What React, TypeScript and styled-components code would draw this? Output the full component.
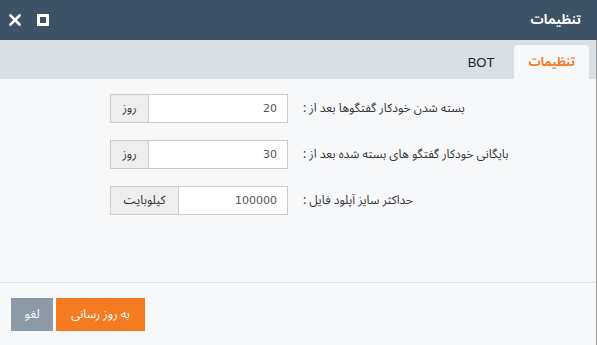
import React from "react";
import styled, { createGlobalStyle } from "styled-components";

const Global = createGlobalStyle`
  html, body { margin: 0; padding: 0; background: #f7f8fa; }
  body { font-family: "Noto Sans Arabic", "DejaVu Sans", "Noto Sans", sans-serif; }
  * { box-sizing: border-box; }
`;

const Dialog = styled.div`
  width: 597px;
  height: 345px;
  display: flex;
  flex-direction: column;
  background: #f7f8fa;
  direction: rtl;
  overflow: hidden;
`;

const Header = styled.div`
  height: 40px;
  flex: none;
  background: #3e5266;
  display: flex;
  align-items: center;
  justify-content: space-between;
  padding: 0 16px 0 9px;
`;

const Title = styled.div`
  color: #ffffff;
  font-size: 13px;
  font-weight: bold;
`;

const HeaderTools = styled.div`
  display: flex;
  direction: ltr;
  align-items: center;
  gap: 16px;
  order: 2;
`;

const Body = styled.div`
  flex: 1;
  display: flex;
  flex-direction: column;
  border-right: 1px solid #9a9a9a;
`;

const TabBar = styled.div`
  height: 39px;
  flex: none;
  background: #d9e0e5;
  display: flex;
  align-items: flex-end;
  padding-right: 7px;
`;

const Tab = styled.div<{ $active?: boolean }>`
  height: 34px;
  padding: ${(p) => (p.$active ? "0 14px" : "0 20px")};
  display: flex;
  align-items: center;
  font-size: ${(p) => (p.$active ? "12px" : "13px")};
  border-radius: 4px 4px 0 0;
  background: ${(p) => (p.$active ? "#f7f8fa" : "transparent")};
  color: ${(p) => (p.$active ? "#f47b20" : "#222")};
  font-weight: ${(p) => (p.$active ? "bold" : "normal")};
  font-family: ${(p) => (p.$active ? "inherit" : '"Liberation Sans", "DejaVu Sans", sans-serif')};
`;

const Form = styled.div`
  flex: 1;
  display: flex;
  flex-direction: column;
  gap: 17px;
  padding: 15px 12px 0 0;
`;

const Row = styled.div`
  display: flex;
  align-items: center;
  gap: 15px;
  height: 29px;
`;

const Label = styled.div`
  width: 281px;
  text-align: left;
  font-size: 12px;
  color: #333;
`;

const InputGroup = styled.div`
  width: 178px;
  height: 29px;
  display: flex;
`;

const Input = styled.input`
  flex: 1;
  min-width: 0;
  height: 29px;
  border: 1px solid #cccccc;
  background: #ffffff;
  padding: 0 10px;
  font-family: "DejaVu Sans", sans-serif;
  font-size: 11px;
  color: #555;
  text-align: right;
  direction: ltr;
  outline: none;
`;

const Addon = styled.div<{ $w: number }>`
  width: ${(p) => p.$w}px;
  flex: none;
  height: 29px;
  border: 1px solid #cccccc;
  border-right: none;
  background: #eeeeee;
  display: flex;
  align-items: center;
  justify-content: center;
  font-size: 12px;
  color: #333;
`;

const Footer = styled.div`
  height: 63px;
  flex: none;
  border-top: 1px solid #e0e3e6;
  display: flex;
  direction: ltr;
  align-items: flex-start;
  padding: 15px 0 0 11px;
  gap: 3px;
`;

const Button = styled.button<{ $variant: "cancel" | "primary" }>`
  height: 33px;
  border: none;
  color: #fff;
  font-family: inherit;
  font-size: 12px;
  padding: 0;
  width: ${(p) => (p.$variant === "cancel" ? "42px" : "89px")};
  background: ${(p) => (p.$variant === "cancel" ? "#8c99a6" : "#f47b20")};
`;

const rows = [
  { label: "بسته شدن خودکار گفتگوها بعد از :", value: "20", unit: "روز", w: 38 },
  { label: "بایگانی خودکار گفتگو های بسته شده بعد از :", value: "30", unit: "روز", w: 38 },
  { label: "حداکثر سایز آپلود فایل :", value: "100000", unit: "کیلوبایت", w: 68 },
];

export default function App() {
  return (
    <>
      <Global />
      <Dialog>
        <Header>
          <Title>تنظیمات</Title>
          <HeaderTools>
            <svg width="12" height="12" viewBox="0 0 12 12">
              <path d="M1.5 1.5 L10.5 10.5 M10.5 1.5 L1.5 10.5" stroke="#fff" strokeWidth="2.6" strokeLinecap="square" />
            </svg>
            <svg width="12" height="12" viewBox="0 0 12 12">
              <rect x="1.5" y="1.5" width="9" height="9" fill="none" stroke="#fff" strokeWidth="3" />
            </svg>
          </HeaderTools>
        </Header>
        <Body>
          <TabBar>
            <Tab $active>تنظیمات</Tab>
            <Tab>BOT</Tab>
          </TabBar>
          <Form>
            {rows.map((r) => (
              <Row key={r.label}>
                <Label>{r.label}</Label>
                <InputGroup>
                  <Input defaultValue={r.value} />
                  <Addon $w={r.w}>{r.unit}</Addon>
                </InputGroup>
              </Row>
            ))}
          </Form>
          <Footer>
            <Button $variant="cancel">لغو</Button>
            <Button $variant="primary">به روز رسانی</Button>
          </Footer>
        </Body>
      </Dialog>
    </>
  );
}
